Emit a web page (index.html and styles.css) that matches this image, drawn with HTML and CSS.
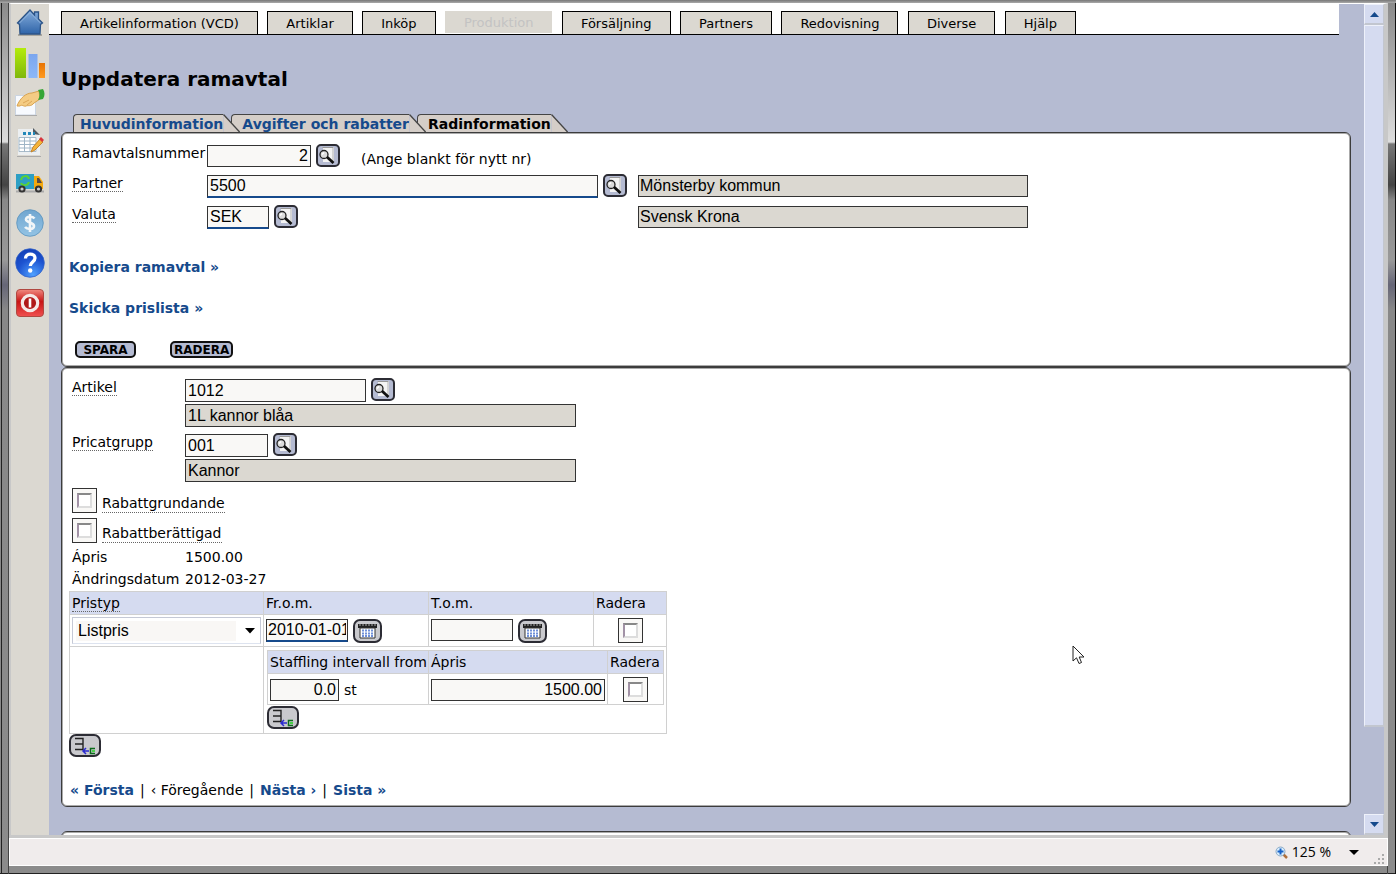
FILE: index.html
```html
<!DOCTYPE html>
<html lang="sv">
<head>
<meta charset="utf-8">
<title>Uppdatera ramavtal</title>
<link rel="stylesheet" href="styles.css">
</head>
<body>
<svg class="defs" width="0" height="0" aria-hidden="true">
  <defs>
    <linearGradient id="blueG" x1="0" y1="0" x2="0" y2="1"><stop offset="0" stop-color="#86aedd"/><stop offset="1" stop-color="#2f64a8"/></linearGradient>
    <linearGradient id="greenG" x1="0" y1="0" x2="0" y2="1"><stop offset="0" stop-color="#b4ec0c"/><stop offset="1" stop-color="#7fb70c"/></linearGradient>
    <linearGradient id="skyG" x1="0" y1="0" x2="0" y2="1"><stop offset="0" stop-color="#7ba6ee"/><stop offset="1" stop-color="#8db8f8"/></linearGradient>
    <linearGradient id="orangeG" x1="0" y1="0" x2="0" y2="1"><stop offset="0" stop-color="#e87400"/><stop offset="1" stop-color="#ff9a20"/></linearGradient>
    <linearGradient id="redG" x1="0" y1="0" x2="0" y2="1"><stop offset="0" stop-color="#f08a80"/><stop offset=".45" stop-color="#c81414"/><stop offset="1" stop-color="#f05050"/></linearGradient>
    <radialGradient id="helpG" cx=".6" cy=".9" r=".9"><stop offset="0" stop-color="#4fa0ff"/><stop offset=".6" stop-color="#1d53d0"/><stop offset="1" stop-color="#1440b8"/></radialGradient>
    <linearGradient id="dollarG" x1="0" y1="0" x2="0" y2="1"><stop offset="0" stop-color="#70a6d0"/><stop offset="1" stop-color="#93c3e4"/></linearGradient>
    <symbol id="lens" viewBox="2 2 20 19">
      <path d="M7 3h11v15H7z" fill="#f4f4f4"/><path d="M6.500 3.500h11" stroke="#999" fill="none"/><path d="M17 4v14" stroke="#d4d4d4" stroke-width="2"/>
      <circle cx="8" cy="10.500" r="4" fill="#dcdcdc" stroke="#222" stroke-width="1.300"/><path d="M6 10.500l2-2" stroke="#fff" stroke-width="1.500"/>
      <path d="M11 13l6.500 6" stroke="#111" stroke-width="2.800"/>
    </symbol>
    <symbol id="calendar" viewBox="2 2 25 20">
      <path d="M5 5h19v4H5z" fill="#222"/><path d="M6 6h17" stroke="#aaa" stroke-width="1" stroke-dasharray="2 1"/>
      <path d="M7 9h15v10H7z" fill="#fff" stroke="#333"/>
      <path d="M9 11.500h12M9 14.500h12M9 17h12" stroke="#6f8fd8" stroke-width="2" stroke-dasharray="2 1"/>
    </symbol>
    <symbol id="addrow" viewBox="2 2 28 19">
      <path d="M6 4.500h8v11H6M6 10h8" fill="none" stroke="#222" stroke-width="1.400"/>
      <path d="M14 17h6M17 14l-3 3 3 3" fill="none" stroke="#2a2ad0" stroke-width="1.500"/>
      <path d="M26 14.500h-4.500v5H26" fill="none" stroke="#0b6b1b" stroke-width="1.500"/><path d="M23 17h3" stroke="#48d348" stroke-width="2"/>
    </symbol>
  </defs>
</svg>
<div class="window">
  <div class="view">
    <aside class="sidebar" aria-label="Genvägar">
      <svg viewBox="0 0 30 30"><path d="M3 27h24" stroke="#aaa79f" stroke-width="2"/><path d="M15 2L2.500 15l2 1.500L5 26h20l.5-9.500 2-1.500-4-4V4h-4v3z" fill="url(#blueG)" stroke="#2c5488" stroke-width="1.300"/><path d="M4.500 15L15 4.500 25.500 15" fill="none" stroke="#a4c3e6" opacity=".7"/></svg>
      <svg viewBox="0 0 30 30"><path d="M0 0h11v30H0z" fill="url(#greenG)"/><path d="M13.500 6h9v24h-9z" fill="url(#skyG)"/><path d="M24 15h6v15h-6z" fill="url(#orangeG)"/></svg>
      <svg viewBox="0 0 30 30"><path d="M.5 7.500h20V27H.5z" fill="#f7faff" stroke="#cad4e1"/><path d="M0 27.500h22" stroke="#aaa"/><path d="M2 18c3-8 9-13 15-13l7-2 1 8-6 4c-3 4-6 2-8 3s-4-2-6 0z" fill="#f4cc84" stroke="#d8a24e"/><path d="M8 15l6-3M12 17l5-4" stroke="#dca65a"/><path d="M23 2l5-1c2 3 2 7 0 10l-5 1c2-4 2-7 0-10z" fill="#36a635"/></svg>
      <svg viewBox="0 0 30 30"><path d="M3 1h16l6 6v20H3z" fill="#eceff1"/><path d="M18 0l7 7-7-1z" fill="#515960"/><path d="M2 28.500h24" stroke="#aaa"/><path d="M8 5.500h12" stroke="#2488b8" stroke-width="3" stroke-dasharray="3 2"/><path d="M4 9.500h17v14H4z" fill="#fff" stroke="#a9bbc9"/><path d="M4 13h17M4 16.500h17M4 20h17M9.500 9v15M15 9v15" stroke="#9fb5c6"/><path d="M16 24l2-5 7-8 3 3-8 8z" fill="#f4b43a" stroke="#c4832c"/><path d="M24 11l2-2 3 3-2 2z" fill="#d8343c"/></svg>
      <svg viewBox="0 0 30 30"><path d="M1 23.500h28" stroke="#aaa" stroke-width="2"/><path d="M1 6h18v15H1z" fill="#2d9fc4"/><path d="M19 8h5l4 6v7h-9z" fill="#f5a90c"/><path d="M22 10h2l3 5h-5z" fill="#594b42"/><path d="M6 12c1-5 7-5 8-1M14 14c-1 4-7 4-8 1" fill="none" stroke="#5bd334" stroke-width="2"/><circle cx="7" cy="21" r="2.600" fill="#ccc" stroke="#333" stroke-width="2"/><circle cx="23.500" cy="21" r="2.600" fill="#ccc" stroke="#333" stroke-width="2"/></svg>
      <svg viewBox="0 0 30 30"><circle cx="15" cy="15" r="13.300" fill="url(#dollarG)" stroke="#5c93bd" stroke-width=".8"/><path d="M19.500 10.500c-2-2.500-8.500-2.500-8.500 1s8 2.500 8 6.500-7 3.500-9 1M15 6v18" fill="none" stroke="#f2f6f8" stroke-width="2.600"/></svg>
      <svg viewBox="0 0 30 30"><circle cx="15" cy="15" r="14.300" fill="url(#helpG)" stroke="#3565c8" stroke-width=".8"/><path d="M10.500 10.500c0-6 9.500-5.500 9.500-.5 0 4-4.700 4-4.700 8" fill="none" stroke="#fff" stroke-width="3.300"/><circle cx="15.200" cy="22.500" r="2.200" fill="#fff"/></svg>
      <svg viewBox="0 0 30 30"><rect x="1.500" y="1.500" width="27" height="27" rx="3.500" fill="url(#redG)" stroke="#b04840"/><circle cx="15" cy="15" r="7.700" fill="#b01818" stroke="#f5e9e7" stroke-width="3.200"/><path d="M15 10.500v9" stroke="#fff" stroke-width="2.600"/></svg>
    </aside>
    <main class="main">
      <nav class="menu">
        <div class="menu-items">
          <button type="button">Artikelinformation (VCD)</button>
          <button type="button">Artiklar</button>
          <button type="button">Inköp</button>
          <button type="button" disabled>Produktion</button>
          <button type="button">Försäljning</button>
          <button type="button">Partners</button>
          <button type="button">Redovisning</button>
          <button type="button">Diverse</button>
          <button type="button">Hjälp</button>
        </div>
      </nav>
      <div class="page">
        <h1>Uppdatera ramavtal</h1>
        <div class="tabs">
          <a class="tab tab-first" href="#"><span>Huvudinformation</span><svg viewBox="0 0 18 19"><path d="M0 0L17 19H0z" fill="#d5cec8"/><path d="M0 .5l17 18.500" fill="none" stroke="#444" stroke-width="1.400"/></svg></a>
          <a class="tab tab-second" href="#"><span>Avgifter och rabatter</span><svg viewBox="0 0 18 19"><path d="M0 0L17 19H0z" fill="#d5cec8"/><path d="M0 .5l17 18.500" fill="none" stroke="#444" stroke-width="1.400"/></svg></a>
          <a class="tab tab-current" href="#" aria-current="page"><span>Radinformation</span><svg viewBox="0 0 18 19"><path d="M0 0L17 19H0z" fill="#d5cec8"/><path d="M0 .5l17 18.500" fill="none" stroke="#444" stroke-width="1.400"/></svg></a>
        </div>
        <section class="panel agreement">
          <div class="fields">
            <div class="row">
              <label for="nr">Ramavtalsnummer</label>
              <div class="entry"><input id="nr" class="w-nr num" value="2"><button type="button" class="lens" aria-label="Sök ramavtal"><svg><use href="#lens"/></svg></button><span class="hint">(Ange blankt för nytt nr)</span></div>
            </div>
            <div class="row">
              <label for="partner"><span class="dotted">Partner</span></label>
              <div class="entry"><input id="partner" class="w-full required" value="5500"><button type="button" class="lens" aria-label="Sök partner"><svg><use href="#lens"/></svg></button></div>
              <input class="w-read" readonly aria-label="Partnernamn" value="Mönsterby kommun">
            </div>
            <div class="row">
              <label for="valuta"><span class="dotted">Valuta</span></label>
              <div class="entry"><input id="valuta" class="w-cur required" value="SEK"><button type="button" class="lens" aria-label="Sök valuta"><svg><use href="#lens"/></svg></button></div>
              <input class="w-read" readonly aria-label="Valutanamn" value="Svensk Krona">
            </div>
          </div>
          <p class="jump"><a href="#">Kopiera ramavtal »</a></p>
          <p class="jump"><a href="#">Skicka prislista »</a></p>
          <div class="actions"><button type="button">SPARA</button><button type="button">RADERA</button></div>
        </section>
        <section class="panel line">
          <div class="fields item">
            <div class="row">
              <label for="artikel"><span class="dotted">Artikel</span></label>
              <div class="stack"><div class="entry"><input id="artikel" class="w-art" value="1012"><button type="button" class="lens" aria-label="Sök artikel"><svg><use href="#lens"/></svg></button></div><input class="w-full" readonly aria-label="Artikelnamn" value="1L kannor blåa"></div>
            </div>
            <div class="row">
              <label for="grupp"><span class="dotted">Pricatgrupp</span></label>
              <div class="stack"><div class="entry"><input id="grupp" class="w-grp" value="001"><button type="button" class="lens" aria-label="Sök pricatgrupp"><svg><use href="#lens"/></svg></button></div><input class="w-full" readonly aria-label="Gruppnamn" value="Kannor"></div>
            </div>
          </div>
          <div class="checks">
            <div><span class="box"><input type="checkbox" id="c1"></span><label for="c1" class="dotted">Rabattgrundande</label></div>
            <div><span class="box"><input type="checkbox" id="c2"></span><label for="c2" class="dotted">Rabattberättigad</label></div>
          </div>
          <dl class="facts"><dt>Ápris</dt><dd>1500.00</dd><dt>Ändringsdatum</dt><dd>2012-03-27</dd></dl>
          <table class="prices">
            <colgroup><col class="c-type"><col class="c-date"><col class="c-date"><col class="c-del"></colgroup>
            <thead><tr><th><span class="dotted">Pristyp</span></th><th>Fr.o.m.</th><th>T.o.m.</th><th>Radera</th></tr></thead>
            <tbody>
              <tr class="entry-row">
                <td><div class="picker"><select aria-label="Pristyp"><option>Listpris</option></select><svg viewBox="0 0 10 6"><path d="M0 0h10L5 5.500z"/></svg></div></td>
                <td><div class="entry"><input class="w-date required" aria-label="Fr.o.m." value="2010-01-01"><button type="button" class="cal" aria-label="Välj datum"><svg><use href="#calendar"/></svg></button></div></td>
                <td><div class="entry"><input class="w-date" aria-label="T.o.m."><button type="button" class="cal" aria-label="Välj datum"><svg><use href="#calendar"/></svg></button></div></td>
                <td class="mid"><span class="box"><input type="checkbox" aria-label="Radera pris"></span></td>
              </tr>
              <tr>
                <td></td>
                <td colspan="3" class="nest">
                  <table class="steps">
                    <colgroup><col class="s-from"><col class="s-price"><col class="s-del"></colgroup>
                    <thead><tr><th>Staffling intervall from</th><th>Ápris</th><th>Radera</th></tr></thead>
                    <tbody><tr>
                      <td><div class="entry qty"><input class="w-qty num" aria-label="Intervall från" value="0.0"><span>st</span></div></td>
                      <td><div class="entry"><input class="w-price num" aria-label="Ápris" value="1500.00"></div></td>
                      <td class="mid"><span class="box"><input type="checkbox" aria-label="Radera intervall"></span></td>
                    </tr></tbody>
                  </table>
                  <button type="button" class="add" aria-label="Lägg till intervall"><svg><use href="#addrow"/></svg></button>
                </td>
              </tr>
            </tbody>
          </table>
          <button type="button" class="add" aria-label="Lägg till pris"><svg><use href="#addrow"/></svg></button>
          <p class="pager"><a href="#">« Första</a><span>|</span><span>‹ Föregående</span><span>|</span><a href="#">Nästa ›</a><span>|</span><a href="#">Sista »</a></p>
        </section>
        <section class="panel next"></section>
      </div>
    </main>
    <div class="scroll">
      <button type="button" aria-label="Rulla upp"><svg viewBox="0 0 9 5"><path d="M0 5h9L4.500 0z"/></svg></button>
      <div class="thumb"></div>
      <div class="rest"></div>
      <button type="button" aria-label="Rulla ned"><svg viewBox="0 0 9 5"><path d="M0 0h9L4.500 5z"/></svg></button>
    </div>
  </div>
  <footer class="status">
    <button type="button" class="zoom">
      <svg class="glass" viewBox="0 0 13 13"><path d="M8.500 8.500l3.500 3.500" stroke="#b0703c" stroke-width="2.500"/><circle cx="5.500" cy="5.500" r="4.500" fill="#d8ecfb" stroke="#8aa9c6"/><path d="M5.500 2.500v6M2.500 5.500h6" stroke="#1560c8" stroke-width="2"/></svg>
      <span>125 %</span>
      <svg class="drop" viewBox="0 0 10 5"><path d="M0 0h10L5 5z"/></svg>
    </button>
    <svg class="grip" viewBox="0 0 12 12"><path d="M9 1h2v2H9zM9 5h2v2H9zM5 5h2v2H5zM9 9h2v2H9zM5 9h2v2H5zM1 9h2v2H1z" fill="#aaa"/></svg>
  </footer>
</div>
<svg class="cursor" viewBox="0 0 13 20"><path d="M1 1v15l3.500-3.200L7 18.500l2.500-1L7.200 12H12z" fill="#fff" stroke="#222"/></svg>
</body>
</html>
```
FILE: styles.css
```css
* { box-sizing: border-box; }
body { margin: 0; font: 14px/17px "DejaVu Sans", Verdana, sans-serif; color: #000; }
h1, p, dl, dd { margin: 0; }
button { font: inherit; color: inherit; padding: 0; }
a { color: #164a8c; font-weight: bold; text-decoration: none; }
.defs { position: absolute; }

/* window frame */
.window {
  height: 100vh; display: flex; flex-direction: column; padding: 3px 8px 8px 9px;
  background:
    linear-gradient(#777, #aaa) 0 0 / 100% 3px no-repeat,
    linear-gradient(#222, #222) 1px 0 / 1px 100% no-repeat,
    linear-gradient(#444, #444) 8px 0 / 1px 100% no-repeat,
    linear-gradient(#111, #111) 100% 0 / 1px 100% no-repeat,
    linear-gradient(#444, #444) calc(100% - 8px) 0 / 1px 100% no-repeat,
    linear-gradient(#222, #222) 0 100% / 100% 1px no-repeat,
    linear-gradient(#888 0, #ddd 142px, #777 144px, #444 185px, #888 200px, #999 260px, #667 285px, #888 310px, #8b8b8b 100%);
}
.view { flex: 1; min-height: 0; display: flex; background: #b5bbd2; border: solid #c8c8c8; border-width: 1px 4px 3px 2px; border-top-color: #fff; }
.sidebar { flex: 0 0 38px; background: #dbd8d1; padding: 4px; display: flex; flex-direction: column; gap: 10px; }
.sidebar svg { width: 30px; height: 30px; }
.main { flex: 1; min-width: 0; overflow: hidden; }

.menu { margin-right: 25px; padding: 7px 12px 0; background: #fff; border-bottom: 1px solid #000; }
.menu-items { display: flex; justify-content: space-between; max-width: 1015px; }
.menu button { height: 23px; padding: 0 18px; border: 1px solid #000; border-bottom: 0; background: #dbd8d1; font-size: 13px; white-space: nowrap; }
.menu button:disabled { height: 22px; border: 0; padding: 0 19px; color: #c3c3c3; }

.page { padding: 32px 13px 0 12px; }
h1 { font-size: 20px; line-height: 24px; }
.tabs { display: flex; height: 18px; margin: 23px 0 0 12px; }
.tab { display: flex; position: relative; z-index: 3; height: 18px; line-height: 18px; }
.tab span { background: #d5cec8; border: 1px solid #444; border-width: 1px 0 0 1px; border-top-left-radius: 4px; padding: 0 0 0 10px; white-space: nowrap; }
.tab svg { width: 18px; height: 18px; }
.tab-first span { padding-left: 6px; }
.tab-second { z-index: 2; margin-left: -10px; }
.tab-current { z-index: 1; margin-left: -10px; color: #000; }

.panel { background: #fff; border: 1px solid #3c3c3c; border-radius: 6px; box-shadow: inset 0 0 0 1px #aaa; padding: 11px 8px 8px; }
.fields { display: flex; flex-direction: column; gap: 7px; padding-left: 2px; }
.row { display: grid; grid-template-columns: 135px 431px auto; justify-content: start; align-items: start; }
.row label { padding-top: 1px; }
.dotted { border-bottom: 1px dotted #666; }
.entry { display: flex; gap: 5px; }
input:not([type]) { height: 22px; margin: 1px 0 0; padding: 0 2px; border: 1px solid #333; border-radius: 0; background: #f9f8f6; font: 16px/20px "Liberation Sans", Arial, sans-serif; color: #000; }
input.required:not([type]) { height: 23px; border-bottom: 2px solid #164a8c; }
input[readonly]:not([type]) { background: #dbd8d1; padding: 0 1px; }
.item input[readonly]:not([type]) { padding: 0 2px; }
.num { text-align: right; }
.w-nr { width: 104px; }
.w-full { width: 391px; }
.w-cur { width: 62px; }
.w-read { width: 390px; }
.w-art { width: 181px; }
.w-grp { width: 83px; }
.w-date { width: 82px; }
.entry-row .w-date { padding: 0 1px; }
.w-qty { width: 69px; }
.w-price { width: 174px; }
.lens, .cal, .add { display: block; border: 2px solid #2c2c34; border-radius: 5px; background: #b5bbd2; }
.lens { width: 24px; height: 23px; }
.lens svg, .cal svg, .add svg { display: block; width: 100%; height: 100%; }
.cal { width: 29px; height: 24px; margin-top: 1px; border-radius: 7px; background: #c9c9cd; }
.add { width: 32px; height: 23px; border-radius: 7px; background: #c9c9cd; }
.hint { padding: 7px 0 0 16px; height: 23px; }
.jump { padding-bottom: 24px; height: 41px; }
.fields + .jump { margin-top: 30px; }
.jump a { margin-left: -1px; }
.actions { display: flex; gap: 34px; padding: 0 5px; }
.actions button { min-width: 61px; height: 17px; padding: 0 2px; border: 2px solid #111; border-radius: 5px; background: #b5bbd2; font-size: 12px; line-height: 12px; font-weight: bold; }

.line { padding: 10px 7px 6px; }
.item { padding-left: 3px; gap: 6px; }
.item .row { grid-template-columns: 113px auto; }
.item input:not([type]) { height: 23px; }
.stack { display: flex; flex-direction: column; gap: 1px; }
.checks { display: flex; flex-direction: column; gap: 5px; padding: 6px 3px 0; }
.checks div { display: flex; gap: 5px; align-items: flex-start; }
.checks label { margin-top: 7px; }
.box { display: inline-flex; width: 25px; height: 25px; padding: 4px; border: 1px solid #333; background: #f9f8f6; vertical-align: top; }
.box input { appearance: none; width: 15px; height: 15px; margin: 0; background: #fff; border: 2px solid; border-color: #888 #ddd #ddd #a292a6; }
.facts { display: grid; grid-template-columns: 113px auto; gap: 5px 0; padding: 6px 3px 3px; }

table { border-collapse: collapse; table-layout: fixed; }
th, td { border: 1px solid #d0d0d0; padding: 0 2px; text-align: left; vertical-align: middle; font-weight: normal; white-space: nowrap; }
th { height: 23px; background: #d5dbf0; }
.prices { width: 597px; }
.c-type { width: 194px; }
.c-date { width: 165px; }
.c-del { width: 73px; }
.entry-row td { height: 32px; }
.prices td.mid { text-align: center; }
.picker { position: relative; width: 189px; height: 27px; padding: 3px; border: 1px solid #c5c9d6; border-bottom-color: #dde3ef; }
.picker select { appearance: none; width: 100%; height: 20px; padding: 0 2px; border: 0; background: linear-gradient(#f9f7f5, #f9f7f5) 0 0 / 160px 100% no-repeat; font: 16px/20px "Liberation Sans", Arial, sans-serif; color: #000; }
.picker svg { position: absolute; right: 5px; top: 10px; width: 10px; height: 6px; pointer-events: none; }
.prices td.nest { padding: 3px 3px 4px; }
.steps { width: 396px; margin-bottom: 1px; }
.s-from { width: 161px; }
.s-price { width: 179px; }
.s-del { width: 56px; }
.steps td { height: 31px; }
.qty span { padding-top: 4px; }
.pager { display: flex; gap: 6px; margin-top: 25px; padding: 0 1px 1px; }
.next { margin-top: 24px; height: 40px; }

.scroll { flex: 0 0 20px; display: flex; flex-direction: column; }
.scroll button, .thumb { background: #d5dbf0; border: 1px solid #eef1fa; border-right-color: #c2c6cf; border-bottom: 2px solid #c2c6cf; }
.scroll button { height: 21px; }
.scroll svg { display: block; width: 9px; height: 5px; margin: auto; fill: #164a8c; }
.thumb { flex: 8; }
.rest { flex: 1; }

.status { display: flex; align-items: center; justify-content: flex-end; height: 28px; padding-right: 2px; background: #f0ecec; border: 1px solid #fff; }
.status .zoom { display: flex; align-items: center; gap: 4px; border: 0; background: none; font: 14px/20px "Open Sans", sans-serif; }
.glass { width: 13px; height: 13px; }
.drop { width: 10px; height: 5px; margin-left: 14px; }
.grip { width: 12px; height: 12px; margin-left: 14px; align-self: flex-end; }
.cursor { position: absolute; left: 1072px; top: 645px; width: 13px; height: 20px; }
```
